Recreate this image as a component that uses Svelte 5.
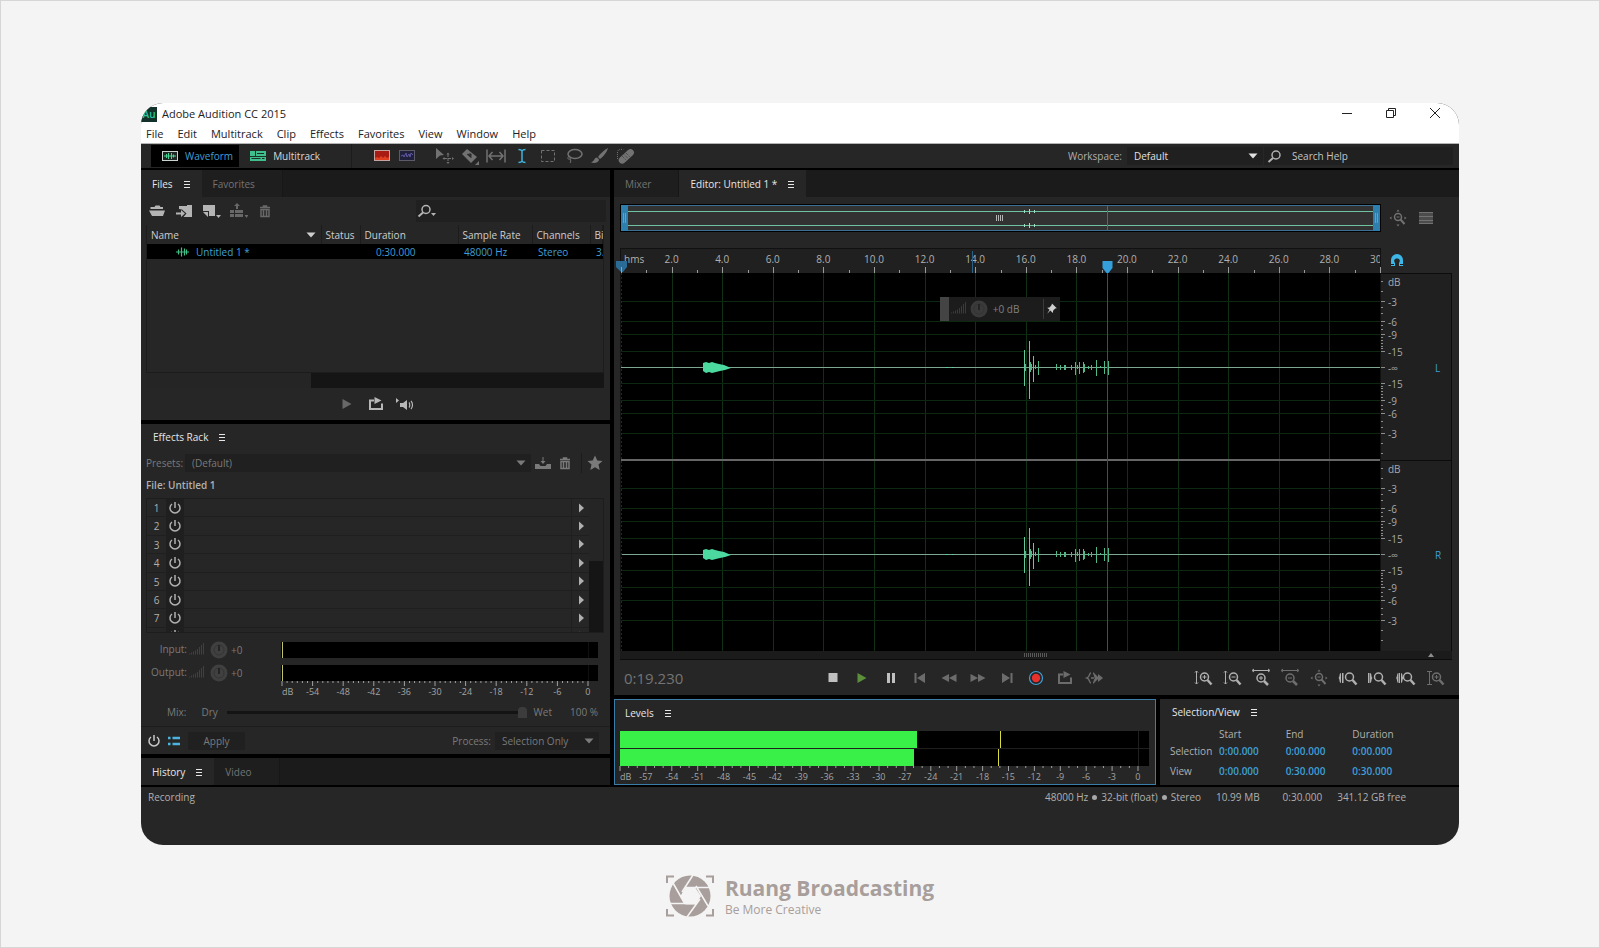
<script lang="ts">
  interface Spike {
    x: number;
    up: number;
    down: number;
  }

  const menus = ['File', 'Edit', 'Multitrack', 'Clip', 'Effects', 'Favorites', 'View', 'Window', 'Help'];
  const tools = ['move', 'razor', 'slip', 'ibeam', 'marquee', 'lasso', 'brush', 'heal'];
  const slots = [1, 2, 3, 4, 5, 6, 7, 8];
  const transport = ['stop', 'play', 'pause', 'prev', 'rewind', 'forward', 'next', 'record', 'loop', 'skip'];
  const zooms = ['zoom-in-amp', 'zoom-out-amp', 'zoom-in-time', 'zoom-out-time', 'zoom-full', 'zoom-in-point', 'zoom-out-point', 'zoom-selection', 'zoom-reset'];

  const seconds = Array.from({ length: 30 }, (_, i) => i + 1);
  const rulerLabels = ['hms', ...Array.from({ length: 15 }, (_, i) => `${(i + 1) * 2}.0`)];
  const rackLabels = ['dB', ...Array.from({ length: 10 }, (_, i) => `${-54 + i * 6}`)];
  const levelLabels = ['dB', ...Array.from({ length: 20 }, (_, i) => `${-57 + i * 3}`)];

  // Plot geometry, in viewBox units
  const plotWidth = 759;
  const pxPerSecond = plotWidth / 30;
  const playhead = Math.floor(19.23 * pxPerSecond) + 0.5;
  const channels = [
    { name: 'L', center: 94 },
    { name: 'R', center: 281 },
  ];
  const dbLines = [
    { label: '-3', offset: 66 },
    { label: '-6', offset: 46 },
    { label: '-9', offset: 33 },
    { label: '-15', offset: 16 },
  ];
  const minorDb = [86, 76, 60, 54, 42, 38, 30, 27, 24, 21, 19];

  const spikes: Spike[] = [
    { x: 403, up: 17, down: 19 },
    { x: 404, up: 3, down: 4 },
    { x: 408, up: 26, down: 32 },
    { x: 409, up: 5, down: 5 },
    { x: 410, up: 3, down: 3 },
    { x: 412, up: 11, down: 15 },
    { x: 414, up: 2, down: 2 },
    { x: 417, up: 6, down: 8 },
    { x: 435, up: 3, down: 3 },
    { x: 439, up: 2, down: 3 },
    { x: 443, up: 2, down: 3 },
    { x: 444, up: 2, down: 3 },
    { x: 450, up: 2, down: 3 },
    { x: 454, up: 5, down: 8 },
    { x: 456, up: 2, down: 2 },
    { x: 458, up: 5, down: 7 },
    { x: 462, up: 5, down: 6 },
    { x: 463, up: 3, down: 5 },
    { x: 467, up: 1, down: 2 },
    { x: 470, up: 2, down: 3 },
    { x: 475, up: 7, down: 9 },
    { x: 479, up: 1, down: 1 },
    { x: 483, up: 6, down: 7 },
    { x: 487, up: 6, down: 8 },
  ];

  const levels = [
    { value: 56.1, peak: 71.9 },
    { value: 55.5, peak: 71.5 },
  ];

  const rows = [
    { label: 'Selection', values: ['0:00.000', '0:00.000', '0:00.000'] },
    { label: 'View', values: ['0:00.000', '0:30.000', '0:30.000'] },
  ];

  let activeMode = $state('Waveform');
  let workspace = $state('Default');
  let mix = $state(100);
</script>

{#snippet icon(name: string)}
  <svg class="icon" viewBox="0 0 20 20" aria-hidden="true">
    {#if name === 'menu'}
      <path d="M7 7.5h6M7 10.5h6M7 13.5h6" stroke="currentColor" />
    {:else if name === 'waveform'}
      <rect x="2.5" y="5.5" width="15" height="9" fill="#1c2622" stroke="#c8d4cf" />
      <path d="M4 10h12M6.500 8v4M8.500 7v6M11.500 7v6M13.500 8.500v3" stroke="#48d597" />
    {:else if name === 'multitrack'}
      <rect x="2" y="5" width="16" height="10" fill="#3fbf8c" />
      <path d="M7.500 5v5M2 10.500h16" stroke="#1c2f27" />
      <path d="M9 7.500h7M3.500 12.500h9M14 12.500h2.500" stroke="#1c2f27" />
    {:else if name === 'spectral'}
      <rect x="2.5" y="4.500" width="15" height="10" fill="#a81c14" stroke="#c4a4a0" />
      <path d="M3 14v-2l2-1 2 1 2-2 2 2 2-2 2 2 2-1v3z" fill="#e04020" />
    {:else if name === 'pitch'}
      <rect x="2.5" y="4.500" width="15" height="10" fill="#20203c" stroke="#5c5c68" />
      <path d="M4 10l2-1 1 2 2-4 1 4 2-3 1 3 1-4 2 2" fill="none" stroke="#6058a0" />
    {:else if name === 'move'}
      <path d="M2 2l8 7-4 .5L2 13z" fill="currentColor" />
      <path d="M14 8v9M10 12.500h9" stroke="currentColor" stroke-dasharray="3 1" />
      <path d="M12.500 8.500L14 6.500l1.500 2zM12.500 16l1.500 2 1.500-2zM10.500 11l-2 1.500 2 1.500zM18 11l2 1.500-2 1.500z" fill="currentColor" />
    {:else if name === 'razor'}
      <path d="M7 3l10 8-6 6L2 8z" fill="currentColor" />
      <path d="M7.500 8l4 3.500M9.500 7.500l2 2" stroke="#262626" stroke-width="1.500" />
      <path d="M19 15v4h-4z" fill="currentColor" />
    {:else if name === 'slip'}
      <path d="M1 3.500v13M19 3.500v13M3 10h14M6.500 6L3 10l3.500 4M13.500 6l3.500 4-3.500 4" fill="none" stroke="currentColor" stroke-width="1.500" />
    {:else if name === 'ibeam'}
      <path d="M6.500 3.500c2 0 3 .5 3.500 1.500.5-1 1.500-1.500 3.500-1.500M10 5v10M6.500 16.500c2 0 3-.5 3.500-1.500.5 1 1.500 1.500 3.500 1.500" fill="none" stroke="#3fb4dc" stroke-width="1.500" />
    {:else if name === 'marquee'}
      <rect x="3.500" y="4.500" width="13" height="11" fill="none" stroke="currentColor" stroke-dasharray="3 2" />
    {:else if name === 'lasso'}
      <ellipse cx="11" cy="8" rx="7" ry="4.500" fill="none" stroke="currentColor" stroke-width="1.500" />
      <path d="M5 10c-2 2-1 4 1 3s0-3-1-2M6 13c1 1 1 3 0 4" fill="none" stroke="currentColor" />
    {:else if name === 'brush'}
      <path d="M18 2c-4 2-8 6-10 9l2 2c3-2 7-7 8-11z" fill="currentColor" />
      <path d="M7 11.500c-3 0-2 3.500-6 5 4 1 8 0 8-3z" fill="currentColor" />
    {:else if name === 'heal'}
      <rect x="1" y="7" width="18" height="7" rx="3.500" fill="currentColor" transform="rotate(-42 10 10)" />
      <path d="M8 8.500l4 4M10 7l4 4M6 10l4 4" stroke="#3a3a3a" stroke-dasharray="1 1" />
      <path d="M1.500 13V6c0-2 2-3 6-2.500" fill="none" stroke="currentColor" stroke-dasharray="1 1" />
    {:else if name === 'search'}
      <circle cx="12" cy="9" r="4" fill="none" stroke="currentColor" stroke-width="1.500" />
      <path d="M9 12l-4.500 4" stroke="currentColor" stroke-width="2" />
    {:else if name === 'search-menu'}
      <circle cx="10" cy="8.500" r="4" fill="none" stroke="currentColor" stroke-width="1.500" />
      <path d="M7 11.500l-4.500 4" stroke="currentColor" stroke-width="2" />
      <path d="M15 12h5l-2.500 3z" fill="currentColor" />
    {:else if name === 'open'}
      <path d="M3.500 8V6h4l1-1.500h4L13.500 6H16v2zM2 9.500h16L16 15H5z" fill="currentColor" />
    {:else if name === 'import'}
      <path d="M5 8V5h8V4h5v12h-8.500l3-3.500-4.500-4z" fill="currentColor" />
      <path d="M2 11.500h5V9l4 3.500L7 16v-2.500H2z" fill="currentColor" />
    {:else if name === 'new'}
      <path d="M2 4h12v11H8v-5H2zM2 11h5v5z" fill="currentColor" />
      <path d="M15 14h5l-2.500 3z" fill="currentColor" />
    {:else if name === 'insert'}
      <path d="M2 9h4v3H2zM2 13h4v3H2zM7 9h8v3H7zM7 13h8v3H7z" fill="currentColor" />
      <path d="M8 8V5H6l3-3 3 3h-2v3zM16.500 14h4l-2 3z" fill="currentColor" />
    {:else if name === 'trash'}
      <path d="M5 6.500h10M8.500 6V5h3v1" fill="none" stroke="currentColor" stroke-width="1.500" />
      <path d="M6 8.500h8v7H6zM8.500 9v6M11.500 9v6" fill="none" stroke="currentColor" stroke-width="1.500" />
    {:else if name === 'save'}
      <path d="M2 11h4l1.500 2h5L14 11h4v5H2z" fill="currentColor" />
      <path d="M9.500 4h1v4h2L10 11 7.500 8h2z" fill="currentColor" />
    {:else if name === 'star'}
      <path d="M10 2.500l2.300 5 5.200.5-4 3.600 1.200 5.400L10 14.200 5.300 17l1.200-5.400-4-3.600 5.200-.5z" fill="currentColor" />
    {:else if name === 'down'}
      <path d="M5.500 7.500h9L10 12.500z" fill="currentColor" />
    {:else if name === 'right'}
      <path d="M8 5.500v9l5-4.500z" fill="currentColor" />
    {:else if name === 'play'}
      <path d="M5.500 5v10l9-5z" fill="currentColor" />
    {:else if name === 'loop'}
      <path d="M8 6.500H4v8.500h12V9.500" fill="none" stroke="currentColor" stroke-width="2" />
      <path d="M8.500 3l7 3.500-7 3.500z" fill="currentColor" />
    {:else if name === 'speaker'}
      <path d="M1 4v5l3-2.500zM5 9h3l4-3v10l-4-3H5z" fill="currentColor" />
      <path d="M14 8.500c1 1 1 4 0 5M16 7c2 2 2 6 0 8" fill="none" stroke="currentColor" stroke-width="1.200" />
    {:else if name === 'power'}
      <path d="M7 6a5 5 0 1 0 6 0" fill="none" stroke="currentColor" stroke-width="1.500" />
      <path d="M10 4v6" stroke="currentColor" stroke-width="1.500" />
    {:else if name === 'list'}
      <path d="M4 7h2.500M4 13h2.500M8.500 7H16M8.500 13H16" stroke="#4bb4de" stroke-width="2.500" />
    {:else if name === 'bars'}
      <path d="M2.500 13.500v1M4.500 12.500v2M6.500 11.500v3M8.500 10.500v4M10.500 9v5.500M12.500 7v7.500M14.500 5v9.500M16.500 3v11.500" stroke="currentColor" />
    {:else if name === 'knob'}
      <circle cx="10" cy="10" r="8.500" fill="currentColor" />
      <circle cx="10" cy="10" r="5" fill="none" stroke="#343434" />
      <path d="M10 5v6" stroke="#242424" stroke-width="2" />
    {:else if name === 'stop'}
      <rect x="5.500" y="5" width="9" height="9" fill="currentColor" />
    {:else if name === 'pause'}
      <path d="M6 5h3v10H6zM11 5h3v10h-3z" fill="currentColor" />
    {:else if name === 'prev'}
      <path d="M4.500 5h2v10h-2zM15 5v10l-8-5z" fill="currentColor" />
    {:else if name === 'next'}
      <path d="M13.500 5h2v10h-2zM5 5v10l8-5z" fill="currentColor" />
    {:else if name === 'rewind'}
      <path d="M10 6v8l-7.500-4zM17.500 6v8L10 10z" fill="currentColor" />
    {:else if name === 'forward'}
      <path d="M2.500 6v8l7.500-4zM10 6v8l7.500-4z" fill="currentColor" />
    {:else if name === 'record'}
      <circle cx="10" cy="10" r="6.500" fill="#262626" stroke="#3f9fd6" stroke-width="1.200" />
      <circle cx="10" cy="10" r="4.200" fill="#e8302c" />
    {:else if name === 'skip'}
      <path d="M7 5C5 5 6 9 3 10c3 1 2 5 4 5M9 5c2 0 1 4 3 5-2 1-1 5-3 5" fill="none" stroke="currentColor" stroke-width="1.500" />
      <path d="M7 10h3" stroke="currentColor" stroke-width="1.500" />
      <path d="M11 6l4 4-4 4zM14 6l5 4-5 4z" fill="currentColor" />
    {:else if name === 'rows'}
      <rect x="3" y="4" width="14" height="12" fill="#4c4c4c" />
      <path d="M3 4.500h14M3 8.500h14M3 12.500h14M3 15.500h14" stroke="currentColor" />
    {:else if name === 'magnet'}
      <path d="M8 15H4V9a6 6 0 0 1 12 0v6h-4v-3c1.500-2 1-4.500-2-4.500S6.500 10 8 12z" fill="#3db7e8" />
      <path d="M4 13.500h3M13 13.500h3" stroke="#1e1e1e" />
    {:else if name === 'pin'}
      <path d="M10 3l6 6-2 .5-2.500 2.500-.5 3-3-3-4 4 3-5-3-2.500 3-.5L9.500 5z" fill="currentColor" />
    {:else if name === 'clip'}
      <path d="M4 10h13M6.500 7.500v5M9.500 5.500v9M12.500 6.500v7M14.500 7.500v5" stroke="#3fbf86" stroke-width="1.200" />
    {:else if name === 'minimize'}
      <path d="M5 10.500h10" stroke="currentColor" />
    {:else if name === 'restore'}
      <path d="M5.500 7.500h7v7h-7zM7.500 7.500v-2h7v7h-2" fill="none" stroke="currentColor" />
    {:else if name === 'close'}
      <path d="M5 5l10 10M15 5L5 15" stroke="currentColor" />
    {:else if name.startsWith('zoom-')}
      {#if name === 'zoom-full'}
        <circle cx="10" cy="9" r="3.500" fill="none" stroke="currentColor" stroke-width="1.500" />
        <path d="M12.500 11.500l4 4.500" stroke="currentColor" stroke-width="2" />
        <path d="M8.500 9h3" stroke="currentColor" />
        <path d="M10 1.500l1.500 2h-3zM10 18.500l1.500-2h-3zM1.500 10l2-1.500v3zM18.500 10l-2-1.500v3z" fill="currentColor" />
      {:else if name.endsWith('time')}
        <circle cx="10" cy="10" r="4" fill="none" stroke="currentColor" stroke-width="1.500" />
        <path d="M13 13l4 4" stroke="currentColor" stroke-width="2.500" />
        <path d="M2 2.500h16M3 1L1 2.500 3 4M17 1l2 1.500L17 4" fill="none" stroke="currentColor" />
      {:else}
        <circle cx="11.500" cy="9" r="4" fill="none" stroke="currentColor" stroke-width="1.500" />
        <path d="M14.500 12l4 4.500" stroke="currentColor" stroke-width="2.500" />
      {/if}
      {#if name.endsWith('amp')}
        <path d="M3.500 3v13M2 4.500L3.500 3 5 4.500M2 14.500L3.500 16 5 14.500" fill="none" stroke="currentColor" />
      {:else if name.endsWith('reset')}
        <path d="M2 3.500h5M2 16.500h5M4.500 4v12" fill="none" stroke="currentColor" />
      {:else if name === 'zoom-in-point'}
        <path d="M3 5c-2 0-1 4-2.500 5 1.500 1 .5 5 2.500 5zM4 5h1.500v10H4z" fill="currentColor" />
      {:else if name === 'zoom-out-point'}
        <path d="M1 5h1.500v10H1zM3 5c2 0 1 4 2.500 5-1.500 1-.5 5-2.500 5z" fill="currentColor" />
      {:else if name === 'zoom-selection'}
        <path d="M2.500 5c-2 0-1 4-2.500 5 1.500 1 .5 5 2.500 5zM3 5h1v10H3zM5 5c2 0 1 4 2.500 5-1.500 1-.5 5-2.500 5z" fill="currentColor" />
      {/if}
      {#if name === 'zoom-in-amp' || name === 'zoom-reset'}
        <path d="M9.500 9h4M11.500 7v4" stroke="currentColor" />
      {:else if name === 'zoom-out-amp'}
        <path d="M9.500 9h4" stroke="currentColor" />
      {:else if name === 'zoom-in-time'}
        <path d="M8 10h4M10 8v4" stroke="currentColor" />
      {:else if name === 'zoom-out-time'}
        <path d="M8 10h4" stroke="currentColor" />
      {/if}
    {/if}
  </svg>
{/snippet}

{#snippet ticks(count: number, major: number)}
  <svg class="ticks" viewBox="0 0 {count * 10} 5" preserveAspectRatio="none" aria-hidden="true">
    {#each Array.from({ length: count + 1 }, (_, i) => i) as i}
      <path d="M{i * 10} 0v{i % major === 0 ? 5 : 2}" stroke="#a0a0a0" vector-effect="non-scaling-stroke" />
    {/each}
  </svg>
{/snippet}

<div class="page">
  <main class="window">
    <header>
      <div class="titlebar">
        <svg class="app-logo" viewBox="0 0 16 15" aria-hidden="true">
          <rect width="16" height="15" fill="#12312b" />
          <text x="8" y="11" text-anchor="middle">Au</text>
        </svg>
        <h1>Adobe Audition CC 2015</h1>
        <div class="window-buttons">
          <button aria-label="Minimize">{@render icon('minimize')}</button>
          <button aria-label="Restore">{@render icon('restore')}</button>
          <button aria-label="Close">{@render icon('close')}</button>
        </div>
      </div>
      <nav>
        {#each menus as menu}
          <button>{menu}</button>
        {/each}
      </nav>
    </header>

    <div class="toolbar">
      <button class="mode" class:active={activeMode === 'Waveform'} onclick={() => (activeMode = 'Waveform')}>
        {@render icon('waveform')} Waveform
      </button>
      <button class="mode" class:active={activeMode === 'Multitrack'} onclick={() => (activeMode = 'Multitrack')}>
        {@render icon('multitrack')} Multitrack
      </button>
      <div class="displays">
        <button aria-label="Spectral frequency display">{@render icon('spectral')}</button>
        <button aria-label="Spectral pitch display">{@render icon('pitch')}</button>
      </div>
      <div class="tools">
        {#each tools as tool}
          <button aria-label={tool}>{@render icon(tool)}</button>
        {/each}
      </div>
      <label class="workspace-label" for="workspace">Workspace:</label>
      <div class="select workspace">
        <select id="workspace" bind:value={workspace}>
          <option>Default</option>
        </select>
        {@render icon('down')}
      </div>
      <div class="help">
        {@render icon('search')}
        <input type="search" placeholder="Search Help" aria-label="Search Help" />
      </div>
    </div>

    <div class="panels">
      <div class="column">
        <section class="panel files">
          <div class="tabs">
            <button class="tab active">Files {@render icon('menu')}</button>
            <button class="tab">Favorites</button>
          </div>
          <div class="file-tools">
            <button aria-label="Open file">{@render icon('open')}</button>
            <button aria-label="Import file">{@render icon('import')}</button>
            <button aria-label="New file">{@render icon('new')}</button>
            <button class="dim" aria-label="Insert into multitrack">{@render icon('insert')}</button>
            <button class="dim" aria-label="Delete">{@render icon('trash')}</button>
            <div class="file-search">
              {@render icon('search-menu')}
              <input type="search" aria-label="Search files" />
            </div>
          </div>
          <div class="file-list">
            <table>
              <colgroup>
                <col class="c-name" /><col class="c-status" /><col class="c-duration" />
                <col class="c-rate" /><col class="c-channels" /><col />
              </colgroup>
              <thead>
                <tr>
                  <th><span class="sort">Name {@render icon('down')}</span></th>
                  <th>Status</th>
                  <th>Duration</th>
                  <th>Sample Rate</th>
                  <th>Channels</th>
                  <th>Bi</th>
                </tr>
              </thead>
              <tbody>
                <tr>
                  <td><span class="file-name">{@render icon('clip')} Untitled 1 *</span></td>
                  <td></td>
                  <td class="num">0:30.000</td>
                  <td>48000 Hz</td>
                  <td>Stereo</td>
                  <td>3.</td>
                </tr>
              </tbody>
            </table>
          </div>
          <div class="h-scroll"><div></div></div>
          <div class="preview">
            <button class="dim" aria-label="Play">{@render icon('play')}</button>
            <button aria-label="Loop">{@render icon('loop')}</button>
            <button aria-label="Auto-play">{@render icon('speaker')}</button>
          </div>
        </section>

        <section class="panel rack">
          <h2>Effects Rack {@render icon('menu')}</h2>
          <div class="presets">
            <label for="preset">Presets:</label>
            <div class="select grow">
              <select id="preset"><option>(Default)</option></select>
              {@render icon('down')}
            </div>
            <button aria-label="Save preset">{@render icon('save')}</button>
            <button aria-label="Delete preset">{@render icon('trash')}</button>
            <button class="favorite" aria-label="Favorite">{@render icon('star')}</button>
          </div>
          <p class="file">File: Untitled 1</p>
          <div class="slots">
            <ol>
              {#each slots as slot}
                <li>
                  <span class="number">{slot}</span>
                  <button class="toggle" aria-label="Power {slot}">{@render icon('power')}</button>
                  <span class="effect"></span>
                  <button class="pick" aria-label="Choose effect {slot}">{@render icon('right')}</button>
                </li>
              {/each}
            </ol>
            <div class="v-scroll"></div>
          </div>
          <div class="io">
            {#each ['Input:', 'Output:'] as label}
              <span class="io-label">{label}</span>
              <span class="gain">{@render icon('bars')}{@render icon('knob')} +0</span>
              <div class="mini-meter"><i></i></div>
            {/each}
            <div class="scale rack-scale">
              {@render ticks(60, 6)}
              <div class="labels">
                {#each rackLabels as label}<span>{label}</span>{/each}
              </div>
            </div>
          </div>
          <div class="mix">
            <label for="mix">Mix:</label>
            <span>Dry</span>
            <input id="mix" type="range" min="0" max="100" bind:value={mix} />
            <span>Wet</span>
            <output>{mix} %</output>
          </div>
          <div class="rack-foot">
            <button class="bright" aria-label="Rack power">{@render icon('power')}</button>
            <button aria-label="Toggle list">{@render icon('list')}</button>
            <button class="apply">Apply</button>
            <label for="process">Process:</label>
            <div class="select process">
              <select id="process"><option>Selection Only</option></select>
              {@render icon('down')}
            </div>
          </div>
        </section>

        <section class="panel">
          <div class="tabs">
            <button class="tab active">History {@render icon('menu')}</button>
            <button class="tab">Video</button>
          </div>
        </section>
      </div>

      <div class="column">
        <section class="panel editor">
          <div class="tabs">
            <button class="tab">Mixer</button>
            <button class="tab active">Editor: Untitled 1 * {@render icon('menu')}</button>
          </div>
          <div class="editor-grid">
            <svg class="overview" viewBox="0 0 759 26" preserveAspectRatio="none" role="img" aria-label="Overview">
              <rect width="759" height="26" fill="#323232" />
              <path d="M0 .5h759M0 25.500h759" stroke="#3b6f94" />
              <path d="M7 6.500h745M7 20.500h745" stroke="#6fc3a2" />
              <path d="M403.500 5v3M408.500 4v5M413.500 5v3M403.500 19v3M408.500 18v5M413.500 19v3" stroke="#9fe0c4" />
              <path d="M375.500 10v6M377.500 10v6M379.500 10v6M381.500 10v6" stroke="#b4b4b4" />
              <path d="M{playhead} 0v26" stroke="#c43a3a" />
              <rect width="7" height="26" fill="#2f7fae" />
              <rect x="752" width="7" height="26" fill="#2f7fae" />
              <path d="M2.500 8v10M4.500 8v10M754.500 8v10M756.500 8v10" stroke="#5aa4cc" />
            </svg>
            <div class="side-tools">
              <button aria-label="Zoom out full">{@render icon('zoom-full')}</button>
              <button aria-label="Show channels">{@render icon('rows')}</button>
            </div>

            <div class="ruler">
              <div class="ruler-labels">
                {#each rulerLabels as label}<span>{label}</span>{/each}
              </div>
              <svg viewBox="0 0 759 24" preserveAspectRatio="none" aria-hidden="true">
                {#each seconds as s}
                  <path d="M{Math.round(s * pxPerSecond) + 0.5} 24v{s % 2 === 0 ? -6 : -3}" stroke="#9a9a9a" />
                {/each}
                <path d="M351.500 2v22" stroke="#2a5f86" />
                <path d="M-5 12H6v6l-4 5h-2l-5-5z" fill="#2b6c96" />
                <path d="M.5 18v6" stroke="#a0a0a0" />
                <path d="M{playhead - 5} 12h10v7l-4 5h-2l-4-5z" fill="#349fdb" />
              </svg>
            </div>
            <div class="snap">
              <button aria-label="Snapping">{@render icon('magnet')}</button>
            </div>

            <div class="plot">
              <svg viewBox="0 0 759 378" preserveAspectRatio="none" role="img" aria-label="Waveform">
                <rect width="759" height="378" fill="#000" />
                {#each seconds.filter((s) => s % 2 === 0 && s < 30) as s}
                  <path d="M{Math.round(s * pxPerSecond) + 0.5} 0v378" stroke="#0f3015" />
                {/each}
                {#each channels as channel}
                  {#each dbLines as line}
                    <path d="M0 {channel.center - line.offset + 0.5}h759M0 {channel.center + line.offset + 0.5}h759" stroke="#0d2811" />
                  {/each}
                  <path d="M0 {channel.center + 0.5}h759" stroke="#7ba88e" />
                  <path
                    d="M82 {channel.center - 4}l3-1 3 1 3-1 3 1 4 1 5 1 7 3-6 2-5 1-4 1-4 1-3-1-3 1-3-2z"
                    fill="#4cd9a0"
                  />
                  <path d="M325 {channel.center + 0.5}h2M331 {channel.center + 0.5}h2" stroke="#4cd9a0" />
                  {#each spikes as spike}
                    <path
                      d="M{spike.x + 0.5} {channel.center - spike.up}V{channel.center + spike.down}"
                      stroke={spike.up > 10 ? '#62c99c' : '#4fb98a'}
                    />
                  {/each}
                {/each}
                <path d="M0 187h759" stroke="#666" stroke-width="2" />
                <path d="M.5 0v378" stroke="#4a1a12" stroke-dasharray="2 2" />
                <path d="M{playhead} 0v378" stroke="#b81c1c" />
              </svg>
              <div class="hud">
                <span class="grip"></span>
                {@render icon('bars')}
                {@render icon('knob')}
                <span class="hud-value">+0 dB</span>
                <button aria-label="Pin">{@render icon('pin')}</button>
              </div>
            </div>
            <svg class="db-axis" viewBox="0 0 71 378" role="img" aria-label="Amplitude">
              {#each channels as channel}
                <text x="7" y={channel.center - 81}>dB</text>
                {#each dbLines as line}
                  <text x="7" y={channel.center - line.offset + 5}>{line.label}</text>
                  <text x="7" y={channel.center + line.offset + 5}>{line.label}</text>
                  <path d="M0 {channel.center - line.offset + 0.5}h4M0 {channel.center + line.offset + 0.5}h4" stroke="#8c8c8c" />
                {/each}
                {#each minorDb as m}
                  <path d="M0 {channel.center - m + 0.5}h2M0 {channel.center + m + 0.5}h2" stroke="#8c8c8c" />
                {/each}
                <path d="M0 {channel.center + 0.5}h4" stroke="#8c8c8c" />
                <text x="7" y={channel.center + 5}>-∞</text>
                <text class="channel" x="54" y={channel.center + 5}>{channel.name}</text>
              {/each}
              <path d="M0 187.500h71" stroke="#0c0c0c" />
            </svg>
          </div>
          <div class="time-scroll">
            <span class="dots"></span>
            <svg viewBox="0 0 6 4" aria-hidden="true"><path d="M0 4l3-4 3 4z" fill="#8c8c8c" /></svg>
          </div>
          <div class="transport">
            <time>0:19.230</time>
            <div class="group">
              {#each transport as name}
                <button class={name} aria-label={name}>{@render icon(name)}</button>
              {/each}
            </div>
            <div class="group zooms">
              {#each zooms as name}
                <button class={name} aria-label={name}>{@render icon(name)}</button>
              {/each}
            </div>
          </div>
        </section>

        <div class="bottom">
          <section class="panel levels">
            <h2>Levels {@render icon('menu')}</h2>
            <div class="meter">
              {#each levels as level}
                <div class="channel-meter">
                  <div class="fill" style="width: {level.value}%"></div>
                  <div class="peak" style="left: {level.peak}%"></div>
                </div>
              {/each}
            </div>
            <div class="scale">
              {@render ticks(60, 3)}
              <div class="labels">
                {#each levelLabels as label}<span>{label}</span>{/each}
              </div>
            </div>
          </section>

          <section class="panel selection">
            <h2>Selection/View {@render icon('menu')}</h2>
            <table>
              <thead>
                <tr><th></th><th>Start</th><th>End</th><th>Duration</th></tr>
              </thead>
              <tbody>
                {#each rows as row}
                  <tr>
                    <th>{row.label}</th>
                    {#each row.values as value}<td>{value}</td>{/each}
                  </tr>
                {/each}
              </tbody>
            </table>
          </section>
        </div>
      </div>
    </div>

    <footer class="status">
      <span>Recording</span>
      <span class="format">48000 Hz <i></i> 32-bit (float) <i></i> Stereo</span>
      <span class="size">10.99 MB</span>
      <span class="length">0:30.000</span>
      <span class="free">341.12 GB free</span>
    </footer>
  </main>

  <div class="brand">
    <svg viewBox="0 0 48 42" aria-hidden="true">
      <path d="M1 8V1.500h7M40 1.500h7V8M47 34v6.500h-7M8 40.500H1V34" fill="none" stroke="#a89e9b" stroke-width="2" />
      <circle cx="24" cy="21" r="20.500" fill="#a89e9b" />
      <path d="M19 13h10.500l5.500 8-5 8.500H19.500l-5-8.500z" fill="#f4f4f4" />
      <path d="M27 0L16 17M46 12.500H19M42 31L30 11M21 42l13-18M3 28.500h27M7 8l12 21" stroke="#f4f4f4" stroke-width="1.600" />
    </svg>
    <div>
      <strong>Ruang Broadcasting</strong>
      <span>Be More Creative</span>
    </div>
  </div>
</div>

<style>
  :global(body) {
    background: #f4f4f4;
  }

  .page {
    box-sizing: border-box;
    min-height: 100vh;
    padding: 102px 140px 0;
    border: 1px solid #d6d6d6;
    font-family: 'Open Sans', 'Noto Sans', sans-serif;
    font-size: 10px;
    line-height: 14px;
    color: #b0b0b0;
  }

  h1,
  h2,
  p,
  ol {
    margin: 0;
    padding: 0;
    font-size: inherit;
    font-weight: inherit;
  }

  button,
  select,
  input {
    margin: 0;
    padding: 0;
    border: 0;
    background: none;
    color: inherit;
    font: inherit;
  }

  button {
    display: flex;
    align-items: center;
    justify-content: center;
  }

  select,
  input {
    appearance: none;
    min-width: 0;
    outline: none;
  }

  input::placeholder {
    color: #c4c4c4;
    opacity: 1;
  }

  .icon {
    display: block;
    flex: none;
    width: 20px;
    height: 20px;
  }

  .window {
    overflow: hidden;
    border-radius: 22px;
    background: #262626;
  }

  header {
    background: #fff;
    color: #222;
    font-size: 11px;
    border-bottom: 1px solid #b4b4b4;
  }

  .titlebar {
    display: flex;
    align-items: center;
    height: 22px;
    gap: 5px;
  }

  .app-logo {
    width: 16px;
    height: 15px;
  }

  .app-logo text {
    fill: #27c9a0;
    font-size: 10px;
    font-weight: 600;
  }

  .window-buttons {
    display: flex;
    gap: 24px;
    margin: 0 14px 2px auto;
  }

  nav {
    display: flex;
    align-items: center;
    gap: 14px;
    height: 18px;
    padding-left: 5px;
  }

  .toolbar {
    display: flex;
    align-items: center;
    height: 24px;
    padding: 0 6px 0 10px;
    border-bottom: 2px solid #000;
  }

  .mode {
    gap: 5px;
    height: 22px;
    padding: 0 6px 0 9px;
    color: #d8d8d8;
    font-weight: 500;
  }

  .mode.active {
    background: #000;
    color: #3f9fd6;
  }

  .displays {
    display: flex;
    gap: 5px;
    margin-left: 25px;
    padding: 2px 8px 2px 20px;
    border-left: 1px solid #1c1c1c;
  }

  .tools {
    display: flex;
    gap: 6px;
    padding-left: 9px;
    color: #727272;
  }

  .workspace-label {
    margin-left: auto;
    padding-right: 5px;
  }

  .select {
    display: flex;
    align-items: center;
    height: 18px;
    background: #202020;
  }

  .select select {
    flex: 1;
    padding-left: 7px;
  }

  .select .icon {
    margin-left: -20px;
    pointer-events: none;
  }

  .workspace {
    width: 136px;
    color: #e0e0e0;
    font-weight: 500;
  }

  .help {
    display: flex;
    align-items: center;
    gap: 8px;
    width: 189px;
    height: 18px;
    margin-left: 1px;
    background: #202020;
  }

  .panels {
    display: grid;
    grid-template-columns: minmax(0, 469fr) minmax(0, 845fr);
    gap: 4px;
    background: #000;
  }

  .column {
    display: flex;
    flex-direction: column;
    gap: 4px;
  }

  .panel {
    background: #262626;
  }

  .tabs {
    display: flex;
    height: 27px;
    background: #1b1b1b;
  }

  .tab {
    gap: 4px;
    padding: 0 27px 0 11px;
    border-right: 1px solid #171717;
    background: #1e1e1e;
    color: #747474;
  }

  .tab.active {
    padding-right: 5px;
    border-right: 0;
    background: #262626;
    color: #e6e6e6;
    font-weight: 500;
  }

  .file-tools {
    display: flex;
    align-items: center;
    gap: 7px;
    height: 28px;
    padding: 0 4px 0 6px;
    color: #b4b4b4;
  }

  .dim {
    color: #686868;
  }

  .file-search {
    display: flex;
    align-items: center;
    width: 190px;
    height: 22px;
    margin-left: auto;
    background: #202020;
  }

  .file-list {
    height: 147px;
    margin: 0 6px 0 5px;
    overflow: hidden;
    border: 1px solid #1c1c1c;
    border-width: 0 1px 1px;
  }

  table {
    border-collapse: collapse;
  }

  th,
  td {
    padding: 0;
    text-align: left;
    font-weight: inherit;
    white-space: nowrap;
  }

  .file-list table {
    width: 100%;
    table-layout: fixed;
  }

  .c-name {
    width: 174px;
  }

  .c-status {
    width: 39px;
  }

  .c-duration {
    width: 98px;
  }

  .c-rate {
    width: 74px;
  }

  .c-channels {
    width: 58px;
  }

  .file-list th {
    height: 19px;
    padding-left: 4px;
    border-right: 1px solid #1c1c1c;
    color: #cecece;
    font-weight: 500;
  }

  .file-list td {
    height: 15px;
    padding-left: 6px;
    background: #000;
    color: #3f9fd6;
    font-weight: 500;
  }

  .file-list .num {
    padding-left: 16px;
  }

  .sort {
    display: flex;
    align-items: center;
    justify-content: space-between;
    height: 18px;
  }

  .file-name {
    display: flex;
    align-items: center;
    gap: 4px;
    height: 15px;
    padding-left: 19px;
  }

  .h-scroll {
    height: 15px;
    margin: 0 6px 0 5px;
    background: #151515;
  }

  .h-scroll div {
    width: 36%;
    height: 15px;
    background: #252525;
  }

  .preview {
    display: flex;
    align-items: center;
    justify-content: center;
    gap: 9px;
    height: 32px;
    color: #b8b8b8;
  }

  h2 {
    display: flex;
    align-items: center;
    gap: 4px;
    height: 26px;
    padding-left: 12px;
    color: #e6e6e6;
    font-weight: 500;
  }

  .rack {
    height: 330px;
    color: #7a7a7a;
  }

  .presets {
    display: flex;
    align-items: center;
    height: 25px;
    padding: 0 0 0 5px;
    gap: 2px;
  }

  .presets .select {
    flex: 1;
  }

  .favorite {
    margin-left: 4px;
    padding: 0 5px 0 3px;
    border-left: 1px solid #1c1c1c;
  }

  .file {
    height: 17px;
    margin-bottom: 3px;
    padding: 3px 0 0 5px;
    color: #b0b0b0;
    font-weight: 600;
  }

  .slots {
    display: flex;
    height: 135px;
    margin: 0 6px 0 5px;
    overflow: hidden;
    border: 1px solid #1d1d1d;
    box-sizing: border-box;
  }

  ol {
    display: grid;
    flex: 1;
    grid-auto-rows: 1fr;
    height: 147px;
    list-style: none;
    color: #b0b0b0;
  }

  li {
    display: flex;
    align-items: stretch;
    border-bottom: 1px solid #1f1f1f;
    overflow: hidden;
  }

  .number {
    width: 19px;
    line-height: 18px;
    text-align: center;
  }

  .toggle {
    width: 18px;
    background: #1f1f1f;
  }

  .effect {
    flex: 1;
    border-right: 1px solid #1f1f1f;
  }

  .pick {
    width: 17px;
  }

  .v-scroll {
    width: 14px;
    background: linear-gradient(#252525 62px, #151515 62px);
  }

  .io {
    display: grid;
    grid-template-columns: 40px 94px 1fr;
    row-gap: 7px;
    margin-top: 9px;
    padding: 0 12px 0 6px;
  }

  .io-label {
    text-align: right;
  }

  .gain {
    display: flex;
    align-items: center;
    gap: 2px;
    height: 16px;
  }

  .gain .icon {
    color: #404040;
  }

  .mini-meter {
    box-sizing: border-box;
    height: 16px;
    border-right: 1px solid #000;
    background: linear-gradient(90deg, #000 calc(100% - 9px), #202020 calc(100% - 9px), #000 calc(100% - 8px));
  }

  .mini-meter i {
    display: block;
    width: 1px;
    height: 16px;
    margin-left: 1px;
    background: #c3c46a;
  }

  .scale {
    color: #a4a4a4;
  }

  .rack-scale {
    grid-column: 3;
    margin: -7px 10px 0 1px;
  }

  .ticks {
    display: block;
    width: 100%;
    height: 5px;
    overflow: visible;
  }

  .labels {
    display: flex;
    justify-content: space-between;
    height: 12px;
    line-height: 12px;
    font-size: 9px;
  }

  .labels span,
  .ruler-labels span {
    display: flex;
    justify-content: center;
    width: 0;
    white-space: nowrap;
  }

  .labels span:first-child,
  .ruler-labels span:first-child {
    justify-content: flex-start;
  }

  .mix {
    display: flex;
    align-items: center;
    height: 28px;
    padding: 0 12px 0 26px;
    border-bottom: 1px solid #1d1d1d;
  }

  .mix label {
    padding-right: 15px;
  }

  .mix input {
    flex: 1;
    height: 14px;
    margin: 0 7px 0 9px;
    background: linear-gradient(transparent 6px, #141414 6px, #141414 9px, transparent 9px);
  }

  .mix input::-webkit-slider-thumb {
    appearance: none;
    width: 9px;
    height: 11px;
    border-radius: 4px 4px 0 0;
    background: #3c3c3c;
  }

  .mix output {
    width: 46px;
    text-align: right;
  }

  .rack-foot {
    display: flex;
    align-items: center;
    height: 28px;
    padding: 0 11px 0 3px;
  }

  .bright {
    color: #c8c8c8;
  }

  .apply {
    width: 57px;
    height: 18px;
    margin-left: 4px;
    background: #202020;
  }

  .rack-foot label {
    margin-left: auto;
    padding-right: 4px;
  }

  .process {
    width: 104px;
  }

  .editor-grid {
    display: grid;
    grid-template-columns: minmax(0, 1fr) 71px;
    padding: 7px 7px 0 6px;
  }

  .overview {
    display: block;
    width: 100%;
    height: 28px;
    box-sizing: border-box;
    border: 1px solid #000;
  }

  .side-tools {
    display: flex;
    align-items: center;
    gap: 8px;
    height: 28px;
    padding-left: 7px;
    color: #727272;
  }

  .ruler {
    position: relative;
    height: 24px;
    margin-top: 16px;
    border: 1px solid #111;
    border-width: 1px 1px 0;
    background: #202020;
  }

  .ruler svg {
    position: absolute;
    inset: 0;
    width: 100%;
    height: 24px;
    overflow: visible;
  }

  .ruler-labels {
    display: flex;
    justify-content: space-between;
    overflow: hidden;
    line-height: 20px;
  }

  .ruler-labels span:first-child {
    padding-left: 3px;
    margin-right: -3px;
  }

  .snap {
    display: flex;
    align-items: flex-end;
    padding: 0 0 2px 6px;
  }

  .plot {
    position: relative;
    border: 1px solid #111;
    border-width: 0 1px;
  }

  .plot > svg {
    display: block;
    width: 100%;
    height: 378px;
  }

  .hud {
    position: absolute;
    top: 24px;
    left: 42%;
    display: flex;
    align-items: center;
    width: 120px;
    height: 24px;
    background: #1c1c1c;
    color: #3a3a3a;
  }

  .grip {
    width: 9px;
    height: 24px;
    background: #444;
  }

  .hud-value {
    flex: 1;
    padding-left: 4px;
    color: #808080;
  }

  .hud button {
    height: 20px;
    border-left: 1px solid #3a3a3a;
    color: #d0d0d0;
  }

  .hud button .icon {
    width: 16px;
    height: 16px;
  }

  .db-axis {
    display: block;
    box-sizing: border-box;
    width: 71px;
    height: 378px;
    background: #202020;
    box-shadow: inset -1px 1px #0c0c0c;
  }

  .db-axis text {
    fill: #a8a8a8;
    font-size: 10px;
  }

  .db-axis .channel {
    fill: #3f9fd6;
    font-weight: 500;
  }

  .time-scroll {
    display: grid;
    grid-template-columns: 1fr 24px 1fr;
    align-items: center;
    height: 8px;
    margin: 0 7px 0 6px;
    border-bottom: 1px solid #0c0c0c;
    background: #1b1b1b;
  }

  .dots {
    grid-column: 2;
    height: 4px;
    background: repeating-linear-gradient(90deg, #585858 0 1px, #1b1b1b 1px 2px);
  }

  .time-scroll svg {
    width: 6px;
    height: 4px;
    margin-right: 18px;
    justify-self: end;
  }

  .transport {
    display: flex;
    align-items: center;
    justify-content: space-between;
    height: 35px;
    padding: 0 10px;
  }

  time {
    width: 115px;
    color: #747474;
    font-size: 15px;
    line-height: 20px;
  }

  .group {
    display: flex;
    color: #6c6c6c;
  }

  .group button {
    width: 29px;
  }

  .group .stop,
  .group .pause {
    color: #c0c0c0;
  }

  .group .play {
    color: #5c8f3a;
  }

  .group.zooms {
    color: #b0b0b0;
  }

  .zooms .zoom-out-time,
  .zooms .zoom-full,
  .zooms .zoom-reset {
    color: #6e6e6e;
  }

  .bottom {
    display: grid;
    grid-template-columns: minmax(0, 542fr) minmax(0, 299fr);
    gap: 4px;
    height: 86px;
  }

  .levels {
    box-sizing: border-box;
    padding: 0 6px 0 5px;
    border: 1px solid #3b7ca8;
  }

  .levels h2 {
    padding-left: 5px;
  }

  .meter {
    display: grid;
    gap: 1px;
    margin-top: 5px;
    background: #1f1f1f;
  }

  .channel-meter {
    position: relative;
    height: 17px;
    background: linear-gradient(90deg, #000 98%, #222 98%, #000 calc(98% + 1px));
  }

  .fill {
    height: 17px;
    background: #38f048;
  }

  .peak {
    position: absolute;
    top: 0;
    width: 1px;
    height: 17px;
    background: #d8dc3c;
  }

  .levels .scale {
    margin-right: 11px;
  }

  .selection table {
    width: 249px;
    margin-left: 10px;
    table-layout: fixed;
  }

  .selection th:first-child {
    width: 49px;
  }

  .selection thead th {
    height: 16px;
    vertical-align: bottom;
  }

  .selection tbody tr {
    height: 20px;
  }

  .selection td {
    color: #3f9fd6;
    font-weight: 600;
  }

  .status {
    display: flex;
    height: 38px;
    padding: 3px 53px 17px 7px;
    border-top: 2px solid #000;
  }

  .format {
    display: flex;
    align-items: center;
    gap: 4px;
    height: 14px;
    margin-left: auto;
  }

  .format i {
    width: 5px;
    height: 5px;
    border-radius: 50%;
    background: #a8a8a8;
  }

  .size {
    margin-left: 15px;
  }

  .length {
    margin-left: 23px;
  }

  .free {
    margin-left: 15px;
  }

  .brand {
    display: flex;
    justify-content: center;
    gap: 11px;
    padding-top: 30px;
    color: #a89e9b;
  }

  .brand svg {
    width: 48px;
    height: 42px;
  }

  .brand strong,
  .brand span {
    display: block;
  }

  .brand strong {
    font-size: 21px;
    line-height: 27px;
  }

  .brand span {
    font-size: 12px;
    line-height: 15px;
  }
</style>
